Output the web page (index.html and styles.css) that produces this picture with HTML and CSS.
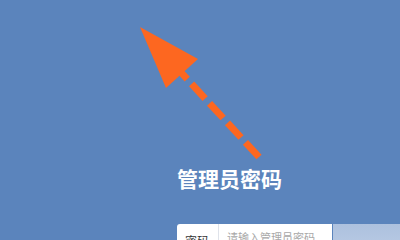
FILE: index.html
```html
<!DOCTYPE html>
<html lang="zh-CN">
<head>
  <meta charset="UTF-8">
  <title>管理员密码</title>
  <link rel="stylesheet" href="styles.css">
</head>
<body>

  <svg class="hint-arrow" width="400" height="166" viewBox="0 0 400 166">
    <line x1="259" y1="157" x2="178" y2="69" stroke="#fd6720" stroke-width="7" stroke-dasharray="20 6.5"/>
    <polygon points="140,27 198,59 166,88" fill="#fd6720"/>
  </svg>

  <div class="panel">
    <h2 class="panel-title">管理员密码</h2>
    <div class="form-row">
      <label class="field-label" for="password">密码</label>
      <input type="password" id="password" class="field-input" placeholder="请输入管理员密码">
      <button class="field-btn"></button>
    </div>
  </div>

</body>
</html>
```

FILE: styles.css
```css
html, body {
  margin: 0;
  height: 240px;
  overflow: hidden;
}

body {
  font-family: "Noto Sans CJK SC", "Liberation Sans", sans-serif;
  background-color: #5b84bc;
}

/* 提示箭头 */
.hint-arrow {
  display: block;
}

.panel {
  margin-left: 177px;
}

.panel-title {
  margin: 0;
  font-size: 21px;
  line-height: 25px;
  font-weight: bold;
  color: #fff;
}

.form-row {
  display: flex;
  margin-top: 33px;
  height: 34px;
}

.field-label {
  width: 33px;
  padding: 8px 0 0 8px;
  background: #fff;
  border-right: 1px solid #dfe3ea;
  border-top-left-radius: 3px;
  font-size: 12px;
  line-height: 17px;
  color: #333;
}

.field-input {
  width: 105px;
  border: none;
  padding: 0 0 9px 8px;
  margin: 0;
  font-family: inherit;
  font-size: 11px;
  background: #fff;
  outline: none;
}

.field-input::placeholder {
  color: #a8a8a8;
}

.field-btn {
  flex: 1;
  margin-left: 1px;
  border: none;
  background: linear-gradient(#adc1de, #bccde6);
}
```
